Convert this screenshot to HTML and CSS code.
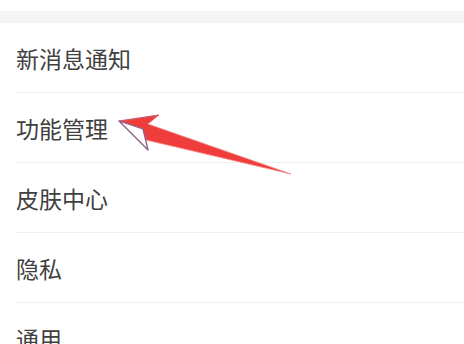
FILE: index.html
```html
<!DOCTYPE html>
<html lang="zh-CN">
  <head>
    <meta charset="UTF-8" />
    <meta name="viewport" content="width=device-width, initial-scale=1.0" />
    <title>设置</title>

    <link rel="stylesheet" href="styles.css">
  </head>
  <body>
    <div class="page">
      <div class="top-space"></div>
      <div class="group-gap"></div>

      <ul class="settings-list">
        <li class="settings-item">新消息通知</li>
        <li class="settings-item">功能管理</li>
        <li class="settings-item">皮肤中心</li>
        <li class="settings-item">隐私</li>
        <li class="settings-item">通用</li>
      </ul>

      <!-- annotation arrow drawn over the list -->
      <svg class="pointer-arrow" width="464" height="344" viewBox="0 0 464 344">
        <polygon points="119,121 159,115 148,124 291,174 146,140 143,129" fill="#ee3d3b" stroke="#f38a8a" stroke-width="0.8" stroke-linejoin="round" />
        <polygon points="119,121 143,129 148,150" fill="#ffffff" />
        <polyline points="143,129 119,121 148,150 143,129" fill="none" stroke="#8c5a86" stroke-width="1.3" stroke-linejoin="round" />
        <line x1="119" y1="121" x2="159" y2="115" stroke="#b04a6a" stroke-width="0.8" />
      </svg>
    </div>
  </body>
</html>
```

FILE: styles.css
```css
* {
  margin: 0;
  padding: 0;
  box-sizing: border-box;
}

body {
  width: 464px;
  height: 344px;
  overflow: hidden;
  background-color: #ffffff;
  font-family: "Noto Sans CJK SC", "Noto Sans", sans-serif;
}

.page {
  position: relative;
  height: 100%;
}

.top-space {
  height: 11px;
}

.group-gap {
  height: 12px;
  background-color: #f4f4f4;
}

.settings-list {
  list-style: none;
}

.settings-item {
  height: 70px;
  margin-left: 16px;
  display: flex;
  align-items: center;
  padding-top: 1px;
  border-bottom: 1px solid #f0f0f0;
  font-size: 23px;
  color: #404040;
}

.pointer-arrow {
  position: absolute;
  left: 0;
  top: 0;
  pointer-events: none;
}
```
